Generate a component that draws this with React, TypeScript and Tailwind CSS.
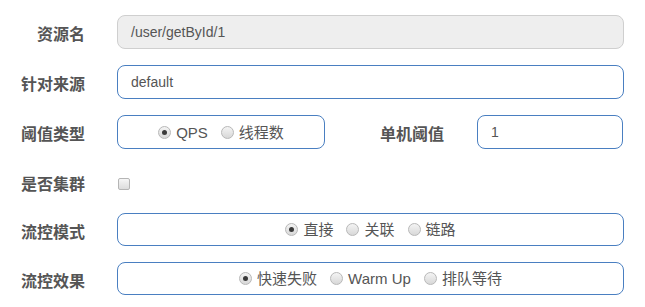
import React from "react";

const cjk = { fontFamily: '"Liberation Sans", "Noto Sans CJK SC", sans-serif' };

function Radio({ checked, label }: { checked?: boolean; label: string }) {
  return (
    <span className="flex items-center gap-[5px]">
      <span className="w-[13px] h-[13px] rounded-full border border-[#b8b8b8] bg-gradient-to-b from-[#f4f4f4] to-[#d8d8d8] flex items-center justify-center">
        {checked && <span className="w-[5px] h-[5px] rounded-full bg-[#3a3a3a]" />}
      </span>
      <span className="mt-[2px]">{label}</span>
    </span>
  );
}

function Label({ children, w = "w-[85px]" }: { children: React.ReactNode; w?: string }) {
  return (
    <div className={`${w} shrink-0 mt-[6px] text-right font-bold text-[16px] text-[#555]`}>{children}</div>
  );
}

export default function App() {
  return (
    <div className="w-[645px] h-[307px] bg-white pt-[15px]" style={cjk}>
      <div className="flex items-center h-[34px]">
        <Label>资源名</Label>
        <div className="ml-[32px] w-[507px] h-[34px] rounded-[8px] border border-[#cfcfcf] bg-[#eeeeee] flex items-center pl-[13px] text-[14px] text-[#555]">
          /user/getById/1
        </div>
      </div>
      <div className="flex items-center h-[34px] mt-[16px]">
        <Label>针对来源</Label>
        <div className="ml-[32px] w-[507px] h-[34px] rounded-[8px] border border-[#4a7fc1] bg-white flex items-center pl-[13px] text-[14px] text-[#555]">
          default
        </div>
      </div>
      <div className="flex items-center h-[34px] mt-[16px]">
        <Label>阈值类型</Label>
        <div className="ml-[32px] w-[208px] h-[34px] rounded-[8px] border border-[#4a7fc1] flex items-center justify-center gap-[13px] text-[15px] text-[#555]">
          <Radio checked label="QPS" />
          <Radio label="线程数" />
        </div>
        <Label w="w-[119px]">单机阈值</Label>
        <div className="ml-[33px] w-[146px] h-[34px] rounded-[8px] border border-[#4a7fc1] bg-white flex items-center pl-[13px] text-[14px] text-[#555]">
          1
        </div>
      </div>
      <div className="flex items-center h-[34px] mt-[16px]">
        <Label>是否集群</Label>
        <div className="ml-[33px] w-[12px] h-[12px] rounded-[2px] border border-[#b5b5b5] bg-gradient-to-b from-[#f6f6f6] to-[#dcdcdc] mt-[3px]" />
      </div>
      <div className="flex items-center h-[33px] mt-[14px]">
        <Label>流控模式</Label>
        <div className="ml-[32px] w-[507px] h-[33px] rounded-[8px] border border-[#4a7fc1] flex items-center justify-center gap-[13px] text-[15px] text-[#555]">
          <Radio checked label="直接" />
          <Radio label="关联" />
          <Radio label="链路" />
        </div>
      </div>
      <div className="flex items-center h-[33px] mt-[16px]">
        <Label>流控效果</Label>
        <div className="ml-[32px] w-[507px] h-[33px] rounded-[8px] border border-[#4a7fc1] flex items-center justify-center gap-[13px] text-[15px] text-[#555]">
          <Radio checked label="快速失败" />
          <Radio label="Warm Up" />
          <Radio label="排队等待" />
        </div>
      </div>
    </div>
  );
}
